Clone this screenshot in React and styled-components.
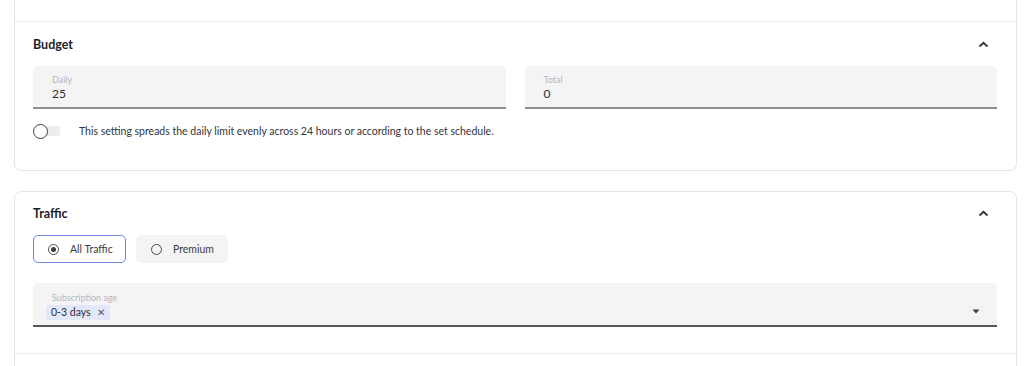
import React from 'react';
import styled, { createGlobalStyle } from 'styled-components';

const GlobalStyle = createGlobalStyle`
  body {
    margin: 0;
    background: #fff;
    font-family: 'Lato', 'Liberation Sans', sans-serif;
    color: #2b2d33;
  }
`;

const Page = styled.div`
  display: flex;
  flex-direction: column;
  gap: 20px;
  padding: 0 7px 0 14px;
`;

const Card = styled.div`
  background: #fff;
  border: 1px solid #e6e6e8;
  border-top: ${p => (p.cutTop ? 'none' : '1px solid #e6e6e8')};
  border-bottom: ${p => (p.cutBottom ? 'none' : '1px solid #e6e6e8')};
  border-radius: ${p =>
    p.cutTop ? '0 0 7px 7px' : p.cutBottom ? '7px 7px 0 0' : '7px'};
`;

const Stub = styled.div`
  height: ${p => p.size}px;
  border-top: ${p => (p.lineTop ? '1px solid #ececee' : 'none')};
  border-bottom: ${p => (p.lineBottom ? '1px solid #ececee' : 'none')};
`;

const Section = styled.div`
  display: flex;
  flex-direction: column;
  gap: ${p => p.gap}px;
  padding: ${p => p.top}px 19px ${p => p.bottom}px 18px;
`;

const Header = styled.div`
  display: flex;
  justify-content: space-between;
  align-items: center;
  height: 14px;
  padding-right: 8px;
`;

const Title = styled.h3`
  margin: 0;
  font-size: 12.5px;
  font-weight: 700;
  color: #1f2128;
`;

const Row = styled.div`
  display: grid;
  grid-template-columns: 1fr 1fr;
  gap: 19px;
`;

const Field = styled.div`
  display: flex;
  flex-direction: column;
  justify-content: center;
  height: ${p => p.height}px;
  box-sizing: border-box;
  padding: 3px 14px 0 19px;
  background: #f4f4f5;
  border-radius: 5px 5px 0 0;
  border-bottom: 2px solid ${p => (p.dark ? '#55575c' : '#8e8f93')};
`;

const FieldLabel = styled.span`
  font-size: 9px;
  color: #b4b5b9;
  line-height: 11px;
`;

const FieldValue = styled.span`
  font-size: 12px;
  color: #2b2d33;
  line-height: 17px;
`;

const ToggleRow = styled.div`
  display: flex;
  align-items: center;
  gap: 19px;
  margin-top: -1px;
`;

const Toggle = styled.div`
  display: flex;
  align-items: center;
  width: 27px;
  height: 16px;
  background: linear-gradient(#ededee, #ededee) no-repeat 8px center / 19px 10px;
  border-radius: 6px;
`;

const Thumb = styled.div`
  width: 13px;
  height: 13px;
  border: 1.5px solid #3c3e44;
  border-radius: 50%;
  background: #fff;
`;

const Hint = styled.span`
  font-size: 10.5px;
  color: #33353a;
`;

const Chevron = () => (
  <svg width="11" height="7" viewBox="0 0 11 7">
    <path d="M1.5 5.5 L5.5 1.8 L9.5 5.5" fill="none" stroke="#33353b" strokeWidth="1.8" />
  </svg>
);

const Choices = styled.div`
  display: flex;
  gap: 10px;
  margin-top: -1px;
  margin-bottom: 4px;
`;

const Choice = styled.div`
  display: flex;
  align-items: center;
  gap: 11px;
  box-sizing: border-box;
  height: 28px;
  width: ${p => p.width}px;
  padding-left: 14px;
  border-radius: 5px;
  border: 1.5px solid ${p => (p.active ? '#6f83e6' : 'transparent')};
  background: ${p => (p.active ? '#fff' : '#f4f4f5')};
  font-size: 10.5px;
  color: #3a3c42;
`;

const Radio = styled.span`
  display: flex;
  align-items: center;
  justify-content: center;
  width: 11px;
  height: 11px;
  box-sizing: border-box;
  border: 1.5px solid #4a4c52;
  border-radius: 50%;

  &::after {
    content: '';
    display: ${p => (p.checked ? 'block' : 'none')};
    width: 5px;
    height: 5px;
    border-radius: 50%;
    background: #3a3c42;
  }
`;

const SelectBody = styled.div`
  display: flex;
  justify-content: space-between;
  align-items: center;
  padding-right: 3px;
`;

const Chip = styled.span`
  display: inline-flex;
  align-items: center;
  gap: 6px;
  height: 15px;
  padding: 0 5px;
  margin-left: -6px;
  margin-top: 2px;
  background: #e2e7fa;
  border-radius: 3px;
  font-size: 10.5px;
  color: #2b2d33;
`;

const ChipClose = styled.span`
  font-size: 10px;
  color: #55575c;
`;

const Caret = () => (
  <svg width="8" height="5" viewBox="0 0 8 5">
    <path d="M0.5 0.5 H7.5 L4 4.5 Z" fill="#3a3c42" />
  </svg>
);

export default function App() {
  return (
    <>
      <GlobalStyle />
      <Page>
        <Card cutTop>
          <Stub size={21} lineBottom />
          <Section top={15} gap={15} bottom={31}>
            <Header>
              <Title>Budget</Title>
              <Chevron />
            </Header>
            <Row>
              <Field height={43}>
                <FieldLabel>Daily</FieldLabel>
                <FieldValue>25</FieldValue>
              </Field>
              <Field height={43}>
                <FieldLabel>Total</FieldLabel>
                <FieldValue>0</FieldValue>
              </Field>
            </Row>
            <ToggleRow>
              <Toggle>
                <Thumb />
              </Toggle>
              <Hint>
                This setting spreads the daily limit evenly across 24 hours or
                according to the set schedule.
              </Hint>
            </ToggleRow>
          </Section>
        </Card>
        <Card cutBottom>
          <Section top={14} gap={16} bottom={26}>
            <Header>
              <Title>Traffic</Title>
              <Chevron />
            </Header>
            <Choices>
              <Choice active width={93}>
                <Radio checked />
                All Traffic
              </Choice>
              <Choice width={92}>
                <Radio />
                Premium
              </Choice>
            </Choices>
            <Field height={44} dark>
              <FieldLabel>Subscription age</FieldLabel>
              <SelectBody>
                <Chip>
                  0-3 days <ChipClose>✕</ChipClose>
                </Chip>
                <Caret />
              </SelectBody>
            </Field>
          </Section>
          <Stub size={12} lineTop />
        </Card>
      </Page>
    </>
  );
}
